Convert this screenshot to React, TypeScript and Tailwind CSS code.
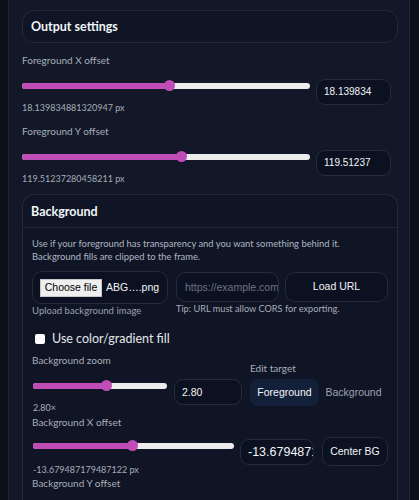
import React from 'react'

const body = { fontFamily: 'Lato, "Open Sans", "Liberation Sans", sans-serif' }
const ctl = { fontFamily: '"Liberation Sans", Arial, sans-serif' }

function Slider({ pct }: { pct: number }) {
  return (
    <div className="relative flex h-[11px] items-center">
      <div className="h-[6px] w-full overflow-hidden rounded-full bg-[#ececec]">
        <div className="h-full bg-[#c04cb8]" style={{ width: `${pct}%` }} />
      </div>
      <div
        className="absolute top-0 -ml-[5.5px] h-[11px] w-[11px] rounded-full bg-[#c04cb8]"
        style={{ left: `${pct}%` }}
      />
    </div>
  )
}

function NumInput({ value, w, size = 'text-[10px]' }: { value: string; w: string; size?: string }) {
  return (
    <div
      style={ctl}
      className={`${w} ${size} h-[26px] shrink-0 overflow-hidden whitespace-nowrap rounded-[9px] border border-[#232b3c] bg-[#0b1121] pl-[7px] leading-[24px] text-[#f3f4f6]`}
    >
      {value}
    </div>
  )
}

function Label({ children }: { children: React.ReactNode }) {
  return <div className="text-[10px] leading-[14px] text-[#a6adb9]">{children}</div>
}

function Value({ children, mt = 'mt-[10px]' }: { children: React.ReactNode; mt?: string }) {
  return <div className={`${mt} text-[9px] leading-[13px] text-[#a6adb9]`}>{children}</div>
}

export default function App() {
  return (
    <div style={body} className="min-h-[500px] overflow-hidden bg-[#0c101a]">
      <div className="ml-2 min-h-[500px] w-[402px] border-x border-[#1e2535] bg-[#121827] pl-[13px] pr-[11px] pt-[10px]">
        {/* Output settings */}
        <div className="flex h-[33px] items-center rounded-[12px] border border-[#222a3a] bg-[#0f1524] pl-[8px] pt-[2px]">
          <h2 className="text-[12.5px] font-bold text-[#f1f5f9]">Output settings</h2>
        </div>

        <div className="mt-[10px] pr-[7px]">
          <Label>Foreground X offset</Label>
          <div className="mt-[12px] flex items-start gap-[6px]">
            <div className="flex-1 pt-[1px]">
              <Slider pct={51.2} />
              <Value>18.139834881320947 px</Value>
            </div>
            <NumInput value="18.139834" w="w-[75px]" />
          </div>
        </div>

        <div className="mt-[10px] pr-[7px]">
          <Label>Foreground Y offset</Label>
          <div className="mt-[12px] flex items-start gap-[6px]">
            <div className="flex-1 pt-[1px]">
              <Slider pct={55.4} />
              <Value>119.51237280458211 px</Value>
            </div>
            <NumInput value="119.51237" w="w-[75px]" />
          </div>
        </div>

        {/* Background */}
        <div className="mt-[9px] rounded-t-[12px] border-x border-t border-[#222a3a] bg-[#0f1524]">
          <div className="flex h-[33px] items-center border-b border-[#222a3a] pl-[8px] pt-[2px]">
            <h2 className="text-[12.5px] font-bold text-[#f1f5f9]">Background</h2>
          </div>
          <div className="pb-4 pl-[9px] pr-[9px]">
            <p className="pt-[9px] text-[9.4px] leading-[13px] text-[#aeb5c2]">
              Use if your foreground has transparency and you want something behind it.
              <br />
              Background fills are clipped to the frame.
            </p>

            <div className="mt-[8px] flex items-start">
              <div className="w-[136px]">
                <div className="flex h-[33px] items-center rounded-[10px] border border-[#232b3c] bg-[#0b1121] pl-[7px]" style={ctl}>
                  <span className="flex h-[18px] w-[62px] items-center justify-center border border-[#c8c8c8] bg-[#efefef] text-[10.5px] text-black">
                    Choose file
                  </span>
                  <span className="ml-[4px] text-[10.5px] text-[#f3f4f6]">ABG….png</span>
                </div>
                <div className="text-[9.6px] leading-[13px] text-[#9aa1ae]">Upload background image</div>
              </div>
              <div className="ml-[8px] mt-[1px] w-[103px]">
                <div
                  style={ctl}
                  className="h-[30px] overflow-hidden whitespace-nowrap rounded-[10px] border border-[#232b3c] bg-[#0b1121] pl-[8px] pr-[7px] text-[10.5px] leading-[28px] text-[#6b7280]"
                >
                  https://example.com
                </div>
                <div className="whitespace-nowrap text-[9.2px] leading-[13px] text-[#a6adb9]">
                  Tip: URL must allow CORS for exporting.
                </div>
              </div>
              <button
                style={ctl}
                className="ml-[6px] mt-[1px] h-[30px] w-[103px] rounded-[10px] border border-[#232b3c] bg-[#0b1121] text-[10.5px] text-[#f3f4f6]"
              >
                Load URL
              </button>
            </div>

            <label className="mt-[14px] flex items-center pl-[3px]">
              <span className="h-[10px] w-[10px] rounded-[2px] bg-white" />
              <span className="ml-[7px] text-[12.5px] leading-[16px] text-[#e5e7eb]">Use color/gradient fill</span>
            </label>

            <div className="mt-[6px] flex items-center">
              <div className="w-[210px]">
                <Label>Background zoom</Label>
                <div className="mt-[12px] flex items-start gap-[7px]">
                  <div className="flex-1 pl-[1px] pt-[1px]">
                    <Slider pct={54.5} />
                    <Value>2.80×</Value>
                  </div>
                  <NumInput value="2.80" w="w-[68px]" size="text-[10.5px]" />
                </div>
              </div>
              <div className="ml-[8px]">
                <div className="text-[10px] leading-[14px] text-[#a6adb9]">Edit target</div>
                <div className="mt-[4px] flex" style={ctl}>
                  <button className="h-[27px] w-[69px] rounded-[8px] bg-[#13203a] text-[10.5px] text-[#f3f4f6]">
                    Foreground
                  </button>
                  <button className="h-[27px] w-[69px] rounded-[8px] text-[10.5px] text-[#9ca3af]">
                    Background
                  </button>
                </div>
              </div>
            </div>

            <div className="mt-[1px]">
              <Label>Background X offset</Label>
              <div className="mt-[10px] flex items-start">
                <div className="w-[202px] pl-[1px] pt-[1px]">
                  <Slider pct={49.5} />
                  <Value mt="mt-[12px]">-13.679487179487122 px</Value>
                </div>
                <div className="ml-[6px]">
                  <NumInput value="-13.679487179" w="w-[74px]" size="text-[12.5px]" />
                </div>
                <button
                  style={ctl}
                  className="-mt-[2px] ml-[8px] h-[29px] w-[66px] rounded-[9px] border border-[#232b3c] bg-[#0b1121] text-[10.5px] text-[#f3f4f6]"
                >
                  Center BG
                </button>
              </div>
              <Label>Background Y offset</Label>
            </div>
          </div>
        </div>
      </div>
    </div>
  )
}
